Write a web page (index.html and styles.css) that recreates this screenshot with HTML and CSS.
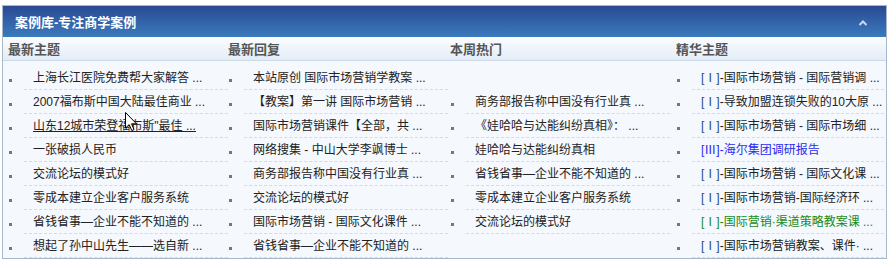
FILE: index.html
```html
<!DOCTYPE html>
<html lang="zh-CN">
<head>
  <meta charset="UTF-8">
  <title>案例库-专注商学案例</title>
  <link rel="stylesheet" href="styles.css">
</head>
<body>
  <div class="case-box">
    <div class="case-title">
      <span>案例库-专注商学案例</span>
      <svg class="fold" width="10" height="8" viewBox="0 0 10 8"><polyline points="1.5,6 5,2.5 8.5,6" fill="none" stroke="#c4dcf2" stroke-width="2"/></svg>
    </div>
    <div class="case-heads">
      <div>最新主题</div>
      <div>最新回复</div>
      <div>本周热门</div>
      <div>精华主题</div>
    </div>
    <div class="case-lists">
      <ul class="list">
        <li><i></i><a>上海长江医院免费帮大家解答 ...</a></li>
        <li><i></i><a>2007福布斯中国大陆最佳商业 ...</a></li>
        <li><i></i><a class="hover">山东12城市荣登福布斯"最佳 ...</a></li>
        <li><i></i><a>一张破损人民币</a></li>
        <li><i></i><a>交流论坛的模式好</a></li>
        <li><i></i><a>零成本建立企业客户服务系统</a></li>
        <li><i></i><a>省钱省事—企业不能不知道的 ...</a></li>
        <li><i></i><a>想起了孙中山先生——选自新 ...</a></li>
      </ul>
      <ul class="list">
        <li><i></i><a>本站原创 国际市场营销学教案 ...</a></li>
        <li><i></i><a>【教案】第一讲 国际市场营销 ...</a></li>
        <li><i></i><a>国际市场营销课件【全部，共 ...</a></li>
        <li><i></i><a>网络搜集 - 中山大学李飒博士 ...</a></li>
        <li><i></i><a>商务部报告称中国没有行业真 ...</a></li>
        <li><i></i><a>交流论坛的模式好</a></li>
        <li><i></i><a>国际市场营销 - 国际文化课件 ...</a></li>
        <li><i></i><a>省钱省事—企业不能不知道的 ...</a></li>
      </ul>
      <ul class="list middle">
        <li><i></i><a>商务部报告称中国没有行业真 ...</a></li>
        <li><i></i><a>《娃哈哈与达能纠纷真相》： ...</a></li>
        <li><i></i><a>娃哈哈与达能纠纷真相</a></li>
        <li><i></i><a>省钱省事—企业不能不知道的 ...</a></li>
        <li><i></i><a>零成本建立企业客户服务系统</a></li>
        <li><i></i><a>交流论坛的模式好</a></li>
      </ul>
      <ul class="list">
        <li><i></i><a><b>[Ⅰ]</b>-国际市场营销 - 国际营销调 ...</a></li>
        <li><i></i><a><b>[Ⅰ]</b>-导致加盟连锁失败的10大原 ...</a></li>
        <li><i></i><a><b>[Ⅰ]</b>-国际市场营销 - 国际市场细 ...</a></li>
        <li><i></i><a class="blue">[Ⅲ]-海尔集团调研报告</a></li>
        <li><i></i><a><b>[Ⅰ]</b>-国际市场营销 - 国际文化课 ...</a></li>
        <li><i></i><a><b>[Ⅰ]</b>-国际市场营销-国际经济环 ...</a></li>
        <li><i></i><a class="green">[Ⅰ]-国际营销·渠道策略教案课 ...</a></li>
        <li><i></i><a><b>[Ⅰ]</b>-国际市场营销教案、课件· ...</a></li>
      </ul>
    </div>
  </div>

  <svg class="pointer" width="13" height="20" viewBox="0 0 13 20"><path d="M0.5,0.5 L0.5,16 L4.2,12.6 L6.8,18.6 L9,17.6 L6.5,11.8 L11.5,11.8 Z" fill="#fff" stroke="#000" stroke-width="1"/></svg>
</body>
</html>
```

FILE: styles.css
```css
body {
  margin: 5px 0 0 2px;
  font-family: "Liberation Sans", "Noto Sans CJK SC", sans-serif;
  font-size: 12px;
  color: #333;
  background: #fff;
  position: relative;
}
ul {
  list-style: none;
  margin: 0;
  padding: 0;
}
.case-box {
  width: 883px;
  border: 1px solid #a8b8c8;
  background: #f5f8fc;
}
.case-title {
  height: 31px;
  display: flex;
  align-items: center;
  justify-content: space-between;
  padding: 0 18px 0 12px;
  background: linear-gradient(#2a4992, #3b7bbf);
  color: #fff;
  font-size: 13px;
  font-weight: bold;
}
.fold {
  margin-top: 3px;
}
.case-heads {
  height: 23px;
  display: grid;
  grid-template-columns: 220px 222px 226px 1fr;
  align-items: center;
  background: linear-gradient(#fcfdff, #e3ecf7);
  border-bottom: 1px solid #cbd9e8;
  color: #555;
  font-size: 13px;
  font-weight: bold;
}
.case-heads div {
  padding-left: 5px;
}
.case-lists {
  display: grid;
  grid-template-columns: 220px 222px 226px 1fr;
  padding-top: 5px;
}
.list {
  display: flex;
  flex-direction: column;
}
.list.middle {
  justify-content: center;
}
.list li {
  height: 24px;
  display: flex;
}
.list i {
  flex: 0 0 21px;
}
.list i::before {
  content: "";
  display: block;
  width: 3px;
  height: 3px;
  background: #777;
  margin: 13px 0 0 6px;
}
.list a {
  flex: 0 0 195px;
  height: 23px;
  line-height: 24px;
  padding-left: 9px;
  border-bottom: 1px dashed #d6dbe2;
  white-space: nowrap;
  overflow: hidden;
  color: #222;
}
.list:last-child a {
  flex: 1 1 auto;
  margin-right: 2px;
}
.list a.hover {
  text-decoration: underline;
}
.list b {
  font-weight: normal;
  color: #1f4f7f;
}
.list a.blue {
  color: #2b2bef;
}
.list a.green {
  color: #178a17;
}
.pointer {
  position: absolute;
  left: 123px;
  top: 107px;
}
```
